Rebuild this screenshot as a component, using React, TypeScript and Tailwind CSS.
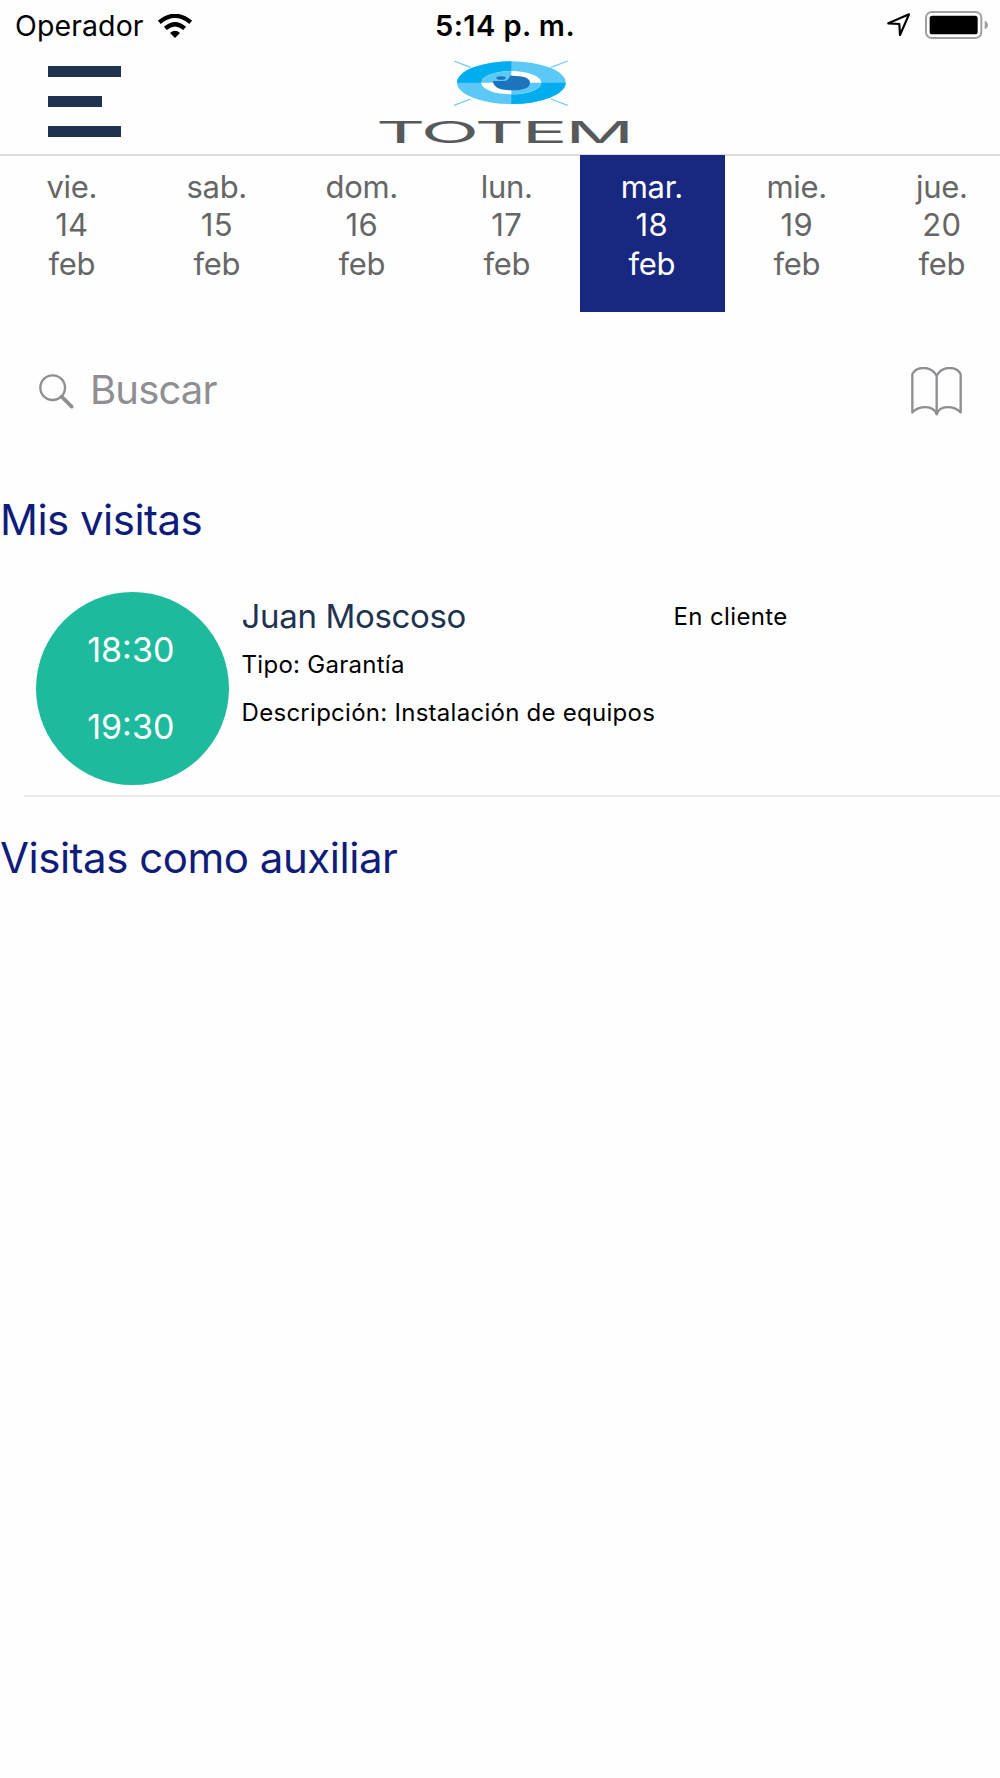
import clsx from "clsx";

const days = [
  { weekday: "vie.", day: 14, month: "feb" },
  { weekday: "sab.", day: 15, month: "feb" },
  { weekday: "dom.", day: 16, month: "feb" },
  { weekday: "lun.", day: 17, month: "feb" },
  { weekday: "mar.", day: 18, month: "feb", selected: true },
  { weekday: "mie.", day: 19, month: "feb" },
  { weekday: "jue.", day: 20, month: "feb" },
];

const visits = [
  {
    start: "18:30",
    end: "19:30",
    client: "Juan Moscoso",
    type: "Garantía",
    description: "Instalación de equipos",
    status: "En cliente",
  },
];

function WifiIcon() {
  return (
    <svg width="34" height="24" viewBox="0 0 102 72" fill="none">
      <path d="M4 25 Q51 -14 98 25" stroke="#000" strokeWidth="13" />
      <path d="M22 43 Q51 18 80 43" stroke="#000" strokeWidth="13" />
      <path d="M36 57 Q51 44 66 57 L51 72 Z" fill="#000" />
    </svg>
  );
}

function LocationIcon() {
  return (
    <svg width="24" height="24" viewBox="0 0 72 72" fill="none">
      <path
        d="M4 31 L66 4 L39 66 L37 33 Z"
        stroke="#000"
        strokeWidth="6.5"
        strokeLinejoin="round"
      />
    </svg>
  );
}

function BatteryIcon() {
  return (
    <svg width="63" height="28" viewBox="0 0 189 84" fill="none">
      <rect x="3" y="3" width="166" height="78" rx="17" stroke="#a0a0a0" strokeWidth="6" />
      <rect x="14" y="14" width="144" height="56" rx="8" fill="#000" />
      <path d="M179 29 Q189 33 189 42 Q189 51 179 55 Z" fill="#a0a0a0" />
    </svg>
  );
}

function SearchIcon() {
  return (
    <svg width="35" height="35" viewBox="0 0 105 105" fill="none" stroke="#8e8e93">
      <circle cx="41" cy="41" r="37" strokeWidth="7" />
      <path d="M68 68 L98 98" strokeWidth="11" strokeLinecap="round" />
    </svg>
  );
}

function BookIcon() {
  return (
    <svg width="51" height="49" viewBox="0 0 153 147" fill="none">
      <path
        d="M77 27 C62 -4 18 -4 4 21 V136 C24 117 66 112 77 142 C87 112 129 117 149 136 V21 C135 -4 91 -4 77 27 V142"
        stroke="#8e8e93"
        strokeWidth="7"
        strokeLinejoin="round"
      />
    </svg>
  );
}

function Logo() {
  return (
    <svg width="256" height="94" viewBox="46 175 768 282">
      <path
        d="M280 181 L330 200 M621 181 L571 200 M280 314 L330 295 M621 314 L571 295"
        stroke="#6fcdf3"
        strokeWidth="4"
      />
      <ellipse cx="452" cy="246" rx="163" ry="64" fill="#5bc8f5" />
      <path d="M452 246 H289 A163 64 0 0 1 452 182 Z" fill="#00aeef" />
      <path d="M452 246 H615 A163 64 0 0 1 452 310 Z" fill="#00aeef" />
      <ellipse cx="452" cy="246" rx="90" ry="35" fill="#fff" />
      <path d="M452 246 H362 A90 35 0 0 1 452 211 Z" fill="#5bc8f5" />
      <path d="M452 246 H542 A90 35 0 0 1 452 281 Z" fill="#5bc8f5" />
      <path
        d="M397 241 H428 Q444 241 448 225 Q508 224 508 246 Q508 269 452 269 Q397 268 397 241 Z"
        fill="#1c75bc"
      />
      <ellipse cx="421" cy="232" rx="14" ry="5.5" fill="#1c75bc" />
      <text
        transform="translate(46 428) scale(2.6 1)"
        fontSize="88"
        letterSpacing="-2.5"
        fill="#58595b"
        className="font-['Inter',sans-serif]"
      >
        TOTEM
      </text>
    </svg>
  );
}

function StatusBar() {
  return (
    <div className="grid h-[50px] grid-cols-[435px_1fr_auto] items-center pt-px pr-[12px] pl-[15px] text-[28.5px] text-black">
      <div className="flex items-center gap-[14px]">
        <span className="pt-px tracking-[0.1px]">Operador</span>
        <WifiIcon />
      </div>
      <span className="-ml-[15px] text-[29px] font-semibold tracking-[0.43px]">
        5:14 p. m.
      </span>
      <div className="flex items-center gap-[14px] pb-[2px]">
        <LocationIcon />
        <BatteryIcon />
      </div>
    </div>
  );
}

function Header() {
  return (
    <header className="flex h-[106px] items-start border-b-2 border-[#dcdcdc] pl-[48px]">
      <button className="mt-[15.5px] mr-[255px] flex w-[73px] flex-col gap-[19px]">
        <span className="h-[11px] w-full bg-[#1e3350]" />
        <span className="h-[11px] w-[54px] bg-[#1e3350]" />
        <span className="h-[11px] w-full bg-[#1e3350]" />
      </button>
      <div className="mt-[8.5px]">
        <Logo />
      </div>
    </header>
  );
}

function DayPicker() {
  return (
    <div className="-mt-px flex h-[157px] overflow-hidden">
      {days.map((d) => (
        <div
          key={d.day}
          className={clsx(
            "flex w-[145px] shrink-0 flex-col items-center pt-[12.5px] pr-[1.5px] text-[31px] leading-[38.8px] tracking-[-0.3px]",
            d.selected ? "bg-[#182880] text-white" : "text-[#666]"
          )}
        >
          <span>{d.weekday}</span>
          <span className="tracking-[0.3px]">{d.day}</span>
          <span>{d.month}</span>
        </div>
      ))}
    </div>
  );
}

export default function App() {
  return (
    <div className="h-[1778px] w-[1000px] overflow-hidden bg-[#fefefe] font-['Inter',sans-serif]">
      <StatusBar />
      <Header />
      <DayPicker />

      <div className="flex h-[155px] items-center px-[38.5px] text-[#8e8e93]">
        <div className="pt-[3px]">
          <SearchIcon />
        </div>
        <span className="ml-[16.5px] flex-1 text-[40px] tracking-[-0.83px]">Buscar</span>
        <div className="pt-[4px]">
          <BookIcon />
        </div>
      </div>

      <h2 className="flex h-[104px] items-center text-[42px] tracking-[-0.52px] text-[#101c7a]">
        Mis visitas
      </h2>
      {visits.map((v) => (
        <div key={v.client} className="ml-6 flex h-[226px] border-b-2 border-[#ebebeb] pt-[20.5px] pl-[12.3px]">
          <div className="flex size-[193px] flex-col items-center justify-center rounded-full bg-[#1dba9d] pr-[4px] text-[34px] leading-[77px] text-white">
            <span>{v.start}</span>
            <span>{v.end}</span>
          </div>
          <div className="ml-[12.3px] w-[432px] text-[24px] leading-[48.5px] tracking-[0.27px] text-black">
            <p className="text-[33px] leading-[49px] tracking-[-0.34px] text-[#1e3350]">{v.client}</p>
            <p>Tipo: {v.type}</p>
            <p>Descripción: {v.description}</p>
          </div>
          <span className="pt-px text-[24px] leading-[48px] tracking-[0.35px] text-black">{v.status}</span>
        </div>
      ))}

      <h2 className="flex h-[121px] items-center text-[42px] tracking-[-0.47px] text-[#101c7a]">
        Visitas como auxiliar
      </h2>
    </div>
  );
}
